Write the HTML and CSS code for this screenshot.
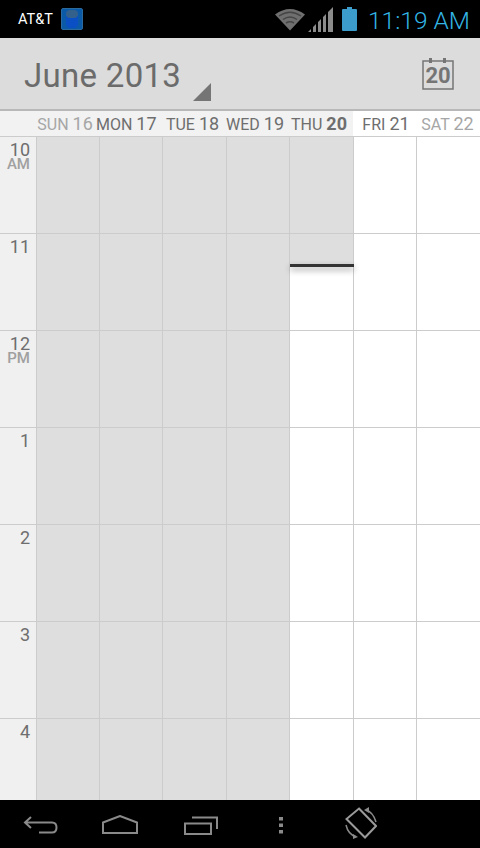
FILE: index.html
```html
<!DOCTYPE html>
<html lang="en">
<head>
    <meta charset="UTF-8">
    <meta name="viewport" content="width=device-width, initial-scale=1.0">
    <title>Calendar</title>
    <link rel="stylesheet" href="styles.css">
</head>
<body>
    <div class="status-bar">
        <span class="carrier">AT&amp;T</span>
        <svg class="notify-icon" width="22" height="22" viewBox="0 0 22 22">
            <rect x="0.5" y="0.5" width="21" height="21" rx="1.5" fill="#0b5aa8" stroke="#2a6a9c"/>
            <rect x="5" y="2" width="12" height="18" rx="4.5" fill="#0a4fc4"/>
            <rect x="5" y="2" width="12" height="8" rx="4" fill="#33618c"/>
        </svg>
        <span class="status-right">
            <svg class="wifi" width="30" height="24" viewBox="0 0 30 24">
                <path d="M0 7.500 Q15 -3.500 30 7.500 L15 23.500 Z" fill="#6f6f6f"/>
                <path d="M4 9 Q15 1.500 26 9 M8 12.500 Q15 7.500 22 12.500 M11 16 Q15 13.500 19 16" fill="none" stroke="#454545" stroke-width="1.500"/>
            </svg>
            <svg class="signal" width="25" height="25" viewBox="0 0 25 25">
                <path d="M0 25 L3 25 L3 22 Z M5 25 V20 L8 17 V25 Z M10 25 V15 L13 12 V25 Z M15 25 V10 L18 7 V25 Z M20 25 V5 L25 0 V25 Z" fill="#8c8c8c"/>
            </svg>
            <svg class="battery" width="15" height="24" viewBox="0 0 15 24">
                <path d="M5 0 H10 V2 H14 Q15 2 15 3 V23 Q15 24 14 24 H1 Q0 24 0 23 V3 Q0 2 1 2 H5 Z" fill="#3c9ccb"/>
            </svg>
            <span class="clock">11:19 AM</span>
        </span>
    </div>

    <header class="action-bar">
        <h1 class="month">June 2013</h1>
        <span class="spinner-arrow"></span>
        <span class="today-btn">
            <svg class="today-frame" width="32" height="32" viewBox="0 0 32 32">
                <path d="M1 3 H31 V31 H1 Z" fill="none" stroke="#757575" stroke-width="1.500"/>
                <rect x="7" y="0" width="3" height="5" fill="#757575"/>
                <rect x="21" y="0" width="3" height="5" fill="#757575"/>
            </svg>
            <span class="today-num">20</span>
        </span>
    </header>

    <div class="day-header">
        <div class="corner"></div>
        <div class="day-label faded">SUN <span class="num">16</span></div>
        <div class="day-label mon">MON <span class="num">17</span></div>
        <div class="day-label tue">TUE <span class="num">18</span></div>
        <div class="day-label wed">WED <span class="num">19</span></div>
        <div class="day-label thu">THU <strong class="num">20</strong></div>
        <div class="day-label upcoming fri">FRI <span class="num">21</span></div>
        <div class="day-label upcoming faded">SAT <span class="num">22</span></div>
    </div>

    <main class="week">
        <div class="hours">
            <div class="hour">10<small>AM</small></div>
            <div class="hour">11</div>
            <div class="hour">12<small>PM</small></div>
            <div class="hour">1</div>
            <div class="hour">2</div>
            <div class="hour">3</div>
            <div class="hour">4</div>
        </div>
        <div class="day past"></div>
        <div class="day past"></div>
        <div class="day past"></div>
        <div class="day past"></div>
        <div class="day today">
            <div class="now-line"></div>
        </div>
        <div class="day"></div>
        <div class="day"></div>
    </main>

    <nav class="nav-bar">
        <svg width="36" height="20" viewBox="0 0 36 20" class="nav-back">
            <path d="M8 1 L2 6.500 L8 12 M2 6.500 H29 Q33.500 6.500 33.500 11.500 Q33.500 16.500 29 16.500 H16" fill="none" stroke="#8a8a8a" stroke-width="2"/>
        </svg>
        <svg width="36" height="20" viewBox="0 0 36 20" class="nav-home">
            <path d="M1 7.500 L18 1 L35 7.500 V18 H1 Z" fill="none" stroke="#8a8a8a" stroke-width="2"/>
        </svg>
        <svg width="36" height="20" viewBox="0 0 36 20" class="nav-recent">
            <path d="M1 7.500 H27 V18 H1 Z M8 1.500 H33 V13" fill="none" stroke="#8a8a8a" stroke-width="2"/>
        </svg>
        <svg width="6" height="18" viewBox="0 0 6 18" class="nav-menu">
            <rect x="0" y="0" width="4" height="3.500" fill="#8a8a8a"/>
            <rect x="0" y="6.500" width="4" height="3.500" fill="#8a8a8a"/>
            <rect x="0" y="13" width="4" height="3.500" fill="#8a8a8a"/>
        </svg>
        <svg width="32" height="32" viewBox="0 0 32 32" class="nav-rotate">
            <path d="M14 1.500 L31 19 L20 30.500 L1.500 12 Z" fill="none" stroke="#9a9a9a" stroke-width="2"/>
            <path d="M21 3 Q28 5 31 15 M1 18 Q3 27 11 30" fill="none" stroke="#8a8a8a" stroke-width="1.500"/>
            <path d="M19 3 L24 0 L24 6 Z M13 30 L8 27 L8 32 Z" fill="#8a8a8a"/>
        </svg>
    </nav>
</body>
</html>
```

FILE: styles.css
```css
* {
    margin: 0;
    padding: 0;
    box-sizing: border-box;
}

body {
    font-family: 'Roboto', sans-serif;
    width: 480px;
    height: 848px;
    overflow: hidden;
    display: flex;
    flex-direction: column;
    background-color: #fff;
}

.status-bar {
    height: 38px;
    background-color: #000;
    display: flex;
    align-items: center;
    padding-left: 18px;
}

.carrier {
    color: #fff;
    font-size: 14.5px;
}

.notify-icon {
    margin-left: 8px;
}

.status-right {
    margin-left: auto;
    display: flex;
    align-items: center;
    padding-right: 10px;
}

.signal {
    margin-left: 3px;
}

.battery {
    margin-left: 9px;
}

.clock {
    color: #33b5e5;
    font-size: 24.5px;
    font-weight: 300;
    margin-left: 11px;
    padding-top: 3px;
}

.action-bar {
    height: 73px;
    background-color: #dcdcdc;
    border-bottom: 2px solid #b8b8b8;
    display: flex;
    align-items: center;
    padding: 4px 0 0 24px;
    position: relative;
}

.month {
    font-size: 33px;
    font-weight: 400;
    color: #6b6b6b;
    letter-spacing: 0.3px;
}

.spinner-arrow {
    position: absolute;
    left: 193px;
    top: 45px;
    width: 18px;
    height: 18px;
    background-color: #757575;
    clip-path: polygon(100% 0, 100% 100%, 0 100%);
}

.today-btn {
    position: absolute;
    left: 422px;
    top: 20px;
    width: 32px;
    height: 32px;
}

.today-frame {
    display: block;
}

.today-num {
    position: absolute;
    left: 0;
    right: 0;
    top: 5px;
    text-align: center;
    font-size: 22px;
    font-weight: 700;
    color: #757575;
}

.day-header {
    height: 25px;
    display: grid;
    grid-template-columns: 36px 63px 63px 64px 63px 64px 63px 64px;
    background-color: #f2f2f2;
}

.day-label {
    font-size: 16px;
    line-height: 26px;
    color: #6e6e6e;
    text-align: center;
    white-space: nowrap;
    padding-right: 5px;
}

.day-label .num {
    font-size: 18px;
}

.day-label.mon {
    margin-left: -3px;
    padding-right: 7px;
}

.day-label.tue {
    padding-right: 3px;
}

.day-label.wed {
    padding-right: 10px;
}

.day-label.thu {
    padding-left: 1px;
}

.day-label.upcoming {
    background-color: #fff;
    padding-right: 1px;
}

.day-label.fri {
    padding: 0 0 0 3px;
}

.faded {
    color: #a6a6a6;
}

.week {
    flex: 1;
    display: grid;
    grid-template-columns: 36px 63px 63px 64px 63px 64px 63px 64px;
    border-top: 1px solid #ccc;
    overflow: hidden;
}

.hours {
    background-color: #f0f0f0;
}

.hour {
    height: 97px;
    border-bottom: 1px solid #ccc;
    text-align: right;
    padding: 3px 6px 0 0;
    font-size: 18px;
    line-height: 19px;
    color: #6e6e6e;
}

.hour small {
    display: block;
    font-size: 15px;
    line-height: 11px;
    font-weight: 500;
    color: #a0a0a0;
}

.day {
    position: relative;
    border-left: 1px solid #ccc;
    background: repeating-linear-gradient(#fff 0, #fff 96px, #ccc 96px, #ccc 97px);
}

.day.past {
    background: repeating-linear-gradient(#dedede 0, #dedede 96px, #ccc 96px, #ccc 97px);
}

.day.today {
    background:
        linear-gradient(#dedede, #dedede) 0 97px / 100% 31px no-repeat,
        repeating-linear-gradient(#dedede 0, #dedede 96px, #ccc 96px, #ccc 97px) 0 0 / 100% 97px no-repeat,
        repeating-linear-gradient(#fff 0, #fff 96px, #ccc 96px, #ccc 97px);
}

/* current time marker */
.now-line {
    position: absolute;
    left: 0;
    right: -1px;
    top: 127px;
    height: 3px;
    background-color: #333;
    box-shadow: 0 3px 6px rgba(0, 0, 0, 0.4);
    z-index: 1;
}

.nav-bar {
    height: 48px;
    background-color: #000;
    position: relative;
    flex-shrink: 0;
}

.nav-bar svg {
    position: absolute;
}

.nav-back {
    left: 23px;
    top: 16px;
}

.nav-home {
    left: 102px;
    top: 15px;
}

.nav-recent {
    left: 184px;
    top: 16px;
}

.nav-menu {
    left: 279px;
    top: 17px;
}

.nav-rotate {
    left: 345px;
    top: 7px;
}
```
